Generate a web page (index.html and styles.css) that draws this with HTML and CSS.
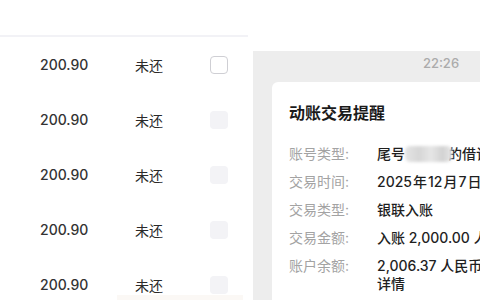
FILE: index.html
```html
<!DOCTYPE html>
<html lang="zh-CN">
<head>
<meta charset="utf-8">
<link rel="stylesheet" href="styles.css">
</head>
<body>
<div class="page">
  <div class="left">
    <div class="head"></div>
    <div class="row"><span class="num">200.90</span><span class="st">未还</span><span class="cb cb-on"></span></div>
    <div class="row"><span class="num">200.90</span><span class="st">未还</span><span class="cb"></span></div>
    <div class="row"><span class="num">200.90</span><span class="st">未还</span><span class="cb"></span></div>
    <div class="row"><span class="num">200.90</span><span class="st">未还</span><span class="cb"></span></div>
    <div class="row"><span class="num">200.90</span><span class="st">未还</span><span class="cb"></span></div>
    <div class="strip"></div>
  </div>
  <div class="right">
    <div class="time">22:26</div>
    <div class="card">
      <div class="title">动账交易提醒</div>
      <div class="line"><span class="lab">账号类型:</span><span class="val">尾号<span class="blur"></span>的借记卡</span></div>
      <div class="line"><span class="lab">交易时间:</span><span class="val">2025<span class="cj">年</span>12<span class="cj">月</span>7<span class="cj">日</span> 22:26</span></div>
      <div class="line"><span class="lab">交易类型:</span><span class="val">银联入账</span></div>
      <div class="line"><span class="lab">交易金额:</span><span class="val">入账 2,000.00 人民币元</span></div>
      <div class="line"><span class="lab">账户余额:</span><span class="val wrap">2,006.37 人民币元，查看详情</span></div>
    </div>
  </div>
</div>
</body>
</html>
```
FILE: styles.css
```css
html, body {
  margin: 0;
  padding: 0;
  width: 480px;
  height: 300px;
  overflow: hidden;
  background: #ffffff;
  font-family: "Inter", "Noto Sans CJK SC", sans-serif;
}
.page {
  display: flex;
  width: 480px;
  height: 300px;
  overflow: hidden;
}
.left {
  position: relative;
  flex: none;
  width: 248px;
}
.head {
  height: 35px;
  border-bottom: 2px solid #f2f2f6;
}
.row {
  display: flex;
  align-items: center;
  height: 55px;
}
.num {
  width: 135px;
  padding-left: 40px;
  box-sizing: border-box;
  font-size: 14px;
  font-weight: 500;
  color: #333333;
}
.st {
  width: 75px;
  font-size: 14px;
  color: #2a2a2a;
}
.cb {
  width: 18px;
  height: 18px;
  box-sizing: border-box;
  border-radius: 4px;
  background: #f3f3f6;
}
.cb-on {
  background: #ffffff;
  border: 1px solid #cfcfd4;
}
.strip {
  position: absolute;
  left: 117px;
  top: 295px;
  width: 126px;
  height: 5px;
  background: #fbf8f5;
}
.right {
  flex: none;
  width: 376px;
  margin-left: 5px;
  margin-top: 51px;
  background: #ededed;
}
.time {
  padding-top: 4px;
  line-height: 16px;
  text-align: center;
  font-size: 13px;
  font-weight: 500;
  color: #ababab;
}
.card {
  margin: 11px 0 0 19px;
  width: 400px;
  background: #ffffff;
  border-radius: 6px;
  padding: 20px 17px;
  height: 300px;
}
.title {
  font-size: 16px;
  line-height: 22px;
  font-weight: 600;
  color: #1a1a1a;
  margin-bottom: 21px;
}
.line {
  display: flex;
  font-size: 14px;
  line-height: 18px;
  margin-bottom: 10px;
}
.lab {
  flex: none;
  width: 88px;
  color: #a3a3a3;
}
.val {
  color: #1f1f1f;
  font-weight: 500;
  white-space: nowrap;
}
.val.wrap {
  white-space: normal;
  width: 165px;
}
.cj {
  margin: 0 1px;
}
.blur {
  display: inline-block;
  vertical-align: -3px;
  width: 47px;
  height: 16px;
  margin-right: -4px;
  border-radius: 5px;
  background: linear-gradient(90deg, #e4e4e4 0%, #d6d6d6 30%, #e6e6e6 55%, #d2d2d2 80%, #e8e8e8 100%);
  filter: blur(1.5px);
  position: relative;
  z-index: 1;
}
```
